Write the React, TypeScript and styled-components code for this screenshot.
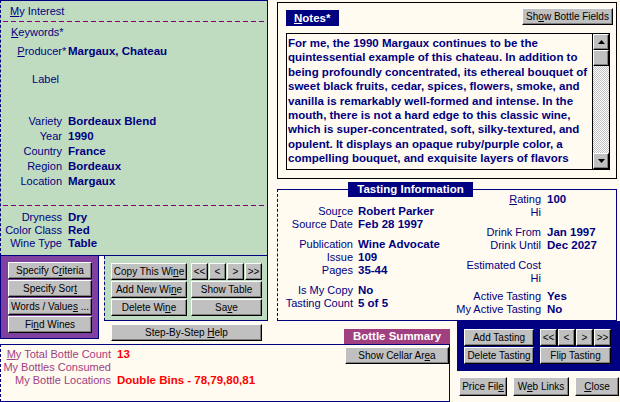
import styled, { createGlobalStyle } from 'styled-components';

const NAVY = '#000080';
const GREEN = '#c0dcc0';
const CREAM = '#fffbf0';
const PURPLE = '#8040a0';
const MAUVE = '#a04080';

const GlobalStyle = createGlobalStyle`
  body {
    margin: 0;
    background: ${CREAM};
    font-family: "Liberation Sans", Arial, sans-serif;
  }
`;

const notes = [
  'For me, the 1990 Margaux continues to be the',
  'quintessential example of this chateau. In addition to',
  'being profoundly concentrated, its ethereal bouquet of',
  'sweet black fruits, cedar, spices, flowers, smoke, and',
  'vanilla is remarkably well-formed and intense. In the',
  'mouth, there is not a hard edge to this classic wine,',
  'which is super-concentrated, soft, silky-textured, and',
  'opulent. It displays an opaque ruby/purple color, a',
  'compelling bouquet, and exquisite layers of flavors',
];

type FieldProps = {
  label: React.ReactNode;
  value?: React.ReactNode;
  w: number;
  gap: number;
  h?: number;
  mt?: number;
  inset?: number;
  color?: string;
  valueColor?: string;
};

const Field = ({ label, value, w, gap, h, mt, inset, color, valueColor }: FieldProps) => (
  <FieldRow $h={h} $mt={mt}>
    <FieldLabel $w={w} $gap={gap} $inset={inset} $color={color}>
      {label}
    </FieldLabel>
    {value && <FieldValue $color={valueColor}>{value}</FieldValue>}
  </FieldRow>
);

const App = () => {
  return (
    <>
      <GlobalStyle />
      <Page>
        <LeftCol>
          <InfoPanel>
            <PanelTitle $h={20} $pl={9}>
              <U>M</U>y Interest
            </PanelTitle>
            <Dashes />
            <PanelTitle $h={21} $pl={10}>
              <U>K</U>eywords*
            </PanelTitle>
            <Field
              h={15}
              w={61}
              gap={6}
              label={
                <>
                  <U>P</U>roducer<Star>*</Star>
                </>
              }
              value='Margaux, Chateau'
            />
            <Field h={15} mt={13} w={61} gap={6} inset={3} label='Label' />
            <Field h={15} mt={27} w={61} gap={6} label='Variety' value='Bordeaux Blend' />
            <Field h={15} w={61} gap={6} label='Year' value='1990' />
            <Field h={15} w={61} gap={6} label='Country' value='France' />
            <Field h={15} w={61} gap={6} label='Region' value='Bordeaux' />
            <Field h={15} w={61} gap={6} label='Location' value='Margaux' />
            <Dashes $mt={17} />
            <Field mt={4} w={61} gap={6} label='Dryness' value='Dry' />
            <Field w={61} gap={6} label='Color Class' value='Red' />
            <Field w={61} gap={6} label='Wine Type' value='Table' />
          </InfoPanel>
          <LowerRow>
            <SearchPanel>
              <Btn $w={84}>
                Specify C<U>r</U>iteria
              </Btn>
              <Btn $w={84}>
                Specify Sor<U>t</U>
              </Btn>
              <Btn $w={84}>
                Words / Value<U>s</U> ...
              </Btn>
              <Btn $w={84}>
                Fi<U>n</U>d Wines
              </Btn>
            </SearchPanel>
            <WineSide>
              <WinePanel>
                <Btn $w={76}>
                  Copy This Wi<U>n</U>e
                </Btn>
                <NavGroup>
                  <Btn $w={17}>&lt;&lt;</Btn>
                  <Btn $w={17}>&lt;</Btn>
                  <Btn $w={17}>&gt;</Btn>
                  <Btn $w={17}>&gt;&gt;</Btn>
                </NavGroup>
                <Btn $w={76}>
                  Add New Wi<U>n</U>e
                </Btn>
                <Btn $w={71}>Show Table</Btn>
                <Btn $w={76}>
                  Delete Wi<U>n</U>e
                </Btn>
                <Btn $w={71}>
                  Sa<U>v</U>e
                </Btn>
              </WinePanel>
              <HelpBtn $w={151} $h={17}>
                Step-By-Step <U>H</U>elp
              </HelpBtn>
            </WineSide>
          </LowerRow>
        </LeftCol>

        <RightTop>
          <NotesPanel>
            <NotesHeader>
              <Tab $bg={NAVY} $w={53} $align='left'>
                <U>N</U>otes*
              </Tab>
              <Btn $w={91}>
                Sh<U>o</U>w Bottle Fields
              </Btn>
            </NotesHeader>
            <TextBox>
              <NoteText>
                {notes.map((line) => (
                  <NoteLine key={line}>{line}</NoteLine>
                ))}
              </NoteText>
              <ScrollBar>
                <ScrollBtn>
                  <svg width='7' height='4' viewBox='0 0 7 4'>
                    <polygon points='3.5,0 7,4 0,4' fill='#000' />
                  </svg>
                </ScrollBtn>
                <ScrollBtn />
                <ScrollTrack />
                <ScrollBtn>
                  <svg width='7' height='4' viewBox='0 0 7 4'>
                    <polygon points='0,0 7,0 3.5,4' fill='#000' />
                  </svg>
                </ScrollBtn>
              </ScrollBar>
            </TextBox>
          </NotesPanel>

          <TastingPanel>
            <FloatingTab $bg={NAVY} $w={125} $align='center'>
              Tasting Information
            </FloatingTab>
            <TastingCol $w={178} $pt={14}>
              <Field
                w={75}
                gap={5}
                label={
                  <>
                    Sou<U>r</U>ce
                  </>
                }
                value='Robert Parker'
              />
              <Field w={75} gap={5} label='Source Date' value='Feb 28 1997' />
              <Field mt={7} w={75} gap={5} label='Publication' value='Wine Advocate' />
              <Field w={75} gap={5} label='Issue' value='109' />
              <Field w={75} gap={5} label='Pages' value='35-44' />
              <Field mt={7} w={75} gap={5} label='Is My Copy' value='No' />
              <Field w={75} gap={5} label='Tasting Count' value='5 of 5' />
            </TastingCol>
            <TastingCol $pt={2}>
              <Field
                w={85}
                gap={6}
                label={
                  <>
                    <U>R</U>ating
                  </>
                }
                value='100'
              />
              <Field w={85} gap={6} label='Hi' />
              <Field mt={7} w={85} gap={6} label='Drink From' value='Jan 1997' />
              <Field w={85} gap={6} label='Drink Until' value='Dec 2027' />
              <Field mt={7} w={85} gap={6} label='Estimated Cost' />
              <Field w={85} gap={6} label='Hi' />
              <Field mt={5} w={85} gap={6} label='Active Tasting' value='Yes' />
              <Field w={85} gap={6} label='My Active Tasting' value='No' />
            </TastingCol>
          </TastingPanel>
        </RightTop>

        <SummaryTab $bg={MAUVE} $w={106} $align='center'>
          Bottle Summary
        </SummaryTab>

        <Summary>
          <SummaryFields>
            <Field
              w={110}
              gap={6}
              color={MAUVE}
              valueColor='#ff0000'
              label={
                <>
                  <U>M</U>y Total Bottle Count
                </>
              }
              value='13'
            />
            <Field w={110} gap={6} color={MAUVE} label='My Bottles Consumed' />
            <Field
              w={110}
              gap={6}
              color={MAUVE}
              valueColor='#ff0000'
              label='My Bottle Locations'
              value='Double Bins - 78,79,80,81'
            />
          </SummaryFields>
          <CellarBtn $w={104}>
            Show Cellar Ar<U>e</U>a
          </CellarBtn>
        </Summary>

        <TastingControls>
          <TastingBar>
            <Btn $w={70}>Add Tasting</Btn>
            <NavGroup>
              <Btn $w={17}>&lt;&lt;</Btn>
              <Btn $w={17}>&lt;</Btn>
              <Btn $w={17}>&gt;</Btn>
              <Btn $w={17}>&gt;&gt;</Btn>
            </NavGroup>
            <Btn $w={70}>Delete Tasting</Btn>
            <Btn $w={71}>Flip Tasting</Btn>
          </TastingBar>
          <Footer>
            <Btn $w={48} $h={19}>
              Price Fil<U>e</U>
            </Btn>
            <Btn $w={56} $h={19}>
              W<U>e</U>b Links
            </Btn>
            <Btn $w={44} $h={19}>
              <U>C</U>lose
            </Btn>
          </Footer>
        </TastingControls>
      </Page>
    </>
  );
};

const Page = styled.div`
  width: 620px;
  height: 402px;
  overflow: hidden;
  display: grid;
  grid-template-columns: 268px 9px 67px 106px 7px 163px;
  grid-template-rows: 321px 23px 58px;
  color: ${NAVY};
`;

const U = styled.span`
  text-decoration: underline;
`;

const Star = styled.span`
  display: inline-block;
  width: 0;
  overflow: visible;
`;

const Btn = styled.button<{ $w: number; $h?: number }>`
  box-sizing: border-box;
  width: ${(p) => p.$w}px;
  height: ${(p) => p.$h ?? 17}px;
  padding: 0;
  background: #c0c0c0;
  border: 1px solid;
  border-color: #fff #000 #000 #fff;
  box-shadow: inset -1px -1px 0 #808080;
  font-family: 'Liberation Sans', Arial, sans-serif;
  font-size: 10px;
  line-height: 1;
  color: #000;
  white-space: nowrap;
  cursor: pointer;
`;

const HelpBtn = styled(Btn)`
  margin: 3px 0 0 7px;
`;

const CellarBtn = styled(Btn)`
  margin: 2px 0 0 0;
`;

const LeftCol = styled.div`
  grid-column: 1;
  grid-row: 1 / 3;
  display: flex;
  flex-direction: column;
`;

const InfoPanel = styled.div`
  box-sizing: border-box;
  height: 256px;
  background: ${GREEN};
  border: 1px solid ${NAVY};
  border-left: 1px dashed ${NAVY};
`;

const PanelTitle = styled.div<{ $h: number; $pl: number }>`
  height: ${(p) => p.$h}px;
  line-height: ${(p) => p.$h}px;
  padding-left: ${(p) => p.$pl}px;
  font-size: 11px;
`;

const Dashes = styled.div<{ $mt?: number }>`
  height: 1px;
  margin: ${(p) => p.$mt ?? 0}px 2px 0 2px;
  background: repeating-linear-gradient(to right, #800080 0 5px, transparent 5px 8px);
`;

const FieldRow = styled.div<{ $h?: number; $mt?: number }>`
  display: flex;
  align-items: center;
  height: ${(p) => p.$h ?? 13}px;
  margin-top: ${(p) => p.$mt ?? 0}px;
  white-space: nowrap;
`;

const FieldLabel = styled.span<{ $w: number; $gap: number; $inset?: number; $color?: string }>`
  box-sizing: border-box;
  flex-shrink: 0;
  width: ${(p) => p.$w + p.$gap}px;
  padding-right: ${(p) => p.$gap + (p.$inset ?? 0)}px;
  text-align: right;
  font-size: 11px;
  color: ${(p) => p.$color ?? NAVY};
`;

const FieldValue = styled.span<{ $color?: string }>`
  font-size: 11.5px;
  font-weight: bold;
  color: ${(p) => p.$color ?? NAVY};
`;

const LowerRow = styled.div`
  display: flex;
`;

const SearchPanel = styled.div`
  box-sizing: border-box;
  width: 99px;
  height: 83px;
  padding: 6px 0 0 7px;
  background: ${PURPLE};
  border: 1px solid ${NAVY};
  border-top: none;
  display: flex;
  flex-direction: column;
  gap: 1px;
`;

const WineSide = styled.div`
  display: flex;
  flex-direction: column;
  margin-left: 5px;
`;

const WinePanel = styled.div`
  box-sizing: border-box;
  width: 164px;
  height: 65px;
  padding: 7px 0 0 6px;
  background: ${GREEN};
  border: 1px solid ${NAVY};
  border-top: none;
  border-left: 1px dashed ${NAVY};
  display: grid;
  grid-template-columns: 76px 71px;
  grid-auto-rows: 17px;
  column-gap: 4px;
  row-gap: 1px;
`;

const NavGroup = styled.div`
  display: flex;
  gap: 1px;
`;

const RightTop = styled.div`
  grid-column: 3 / 7;
  grid-row: 1;
  display: flex;
  flex-direction: column;
  padding-right: 3px;
`;

const NotesPanel = styled.div`
  box-sizing: border-box;
  height: 177px;
  margin-top: 2px;
  border: 1px solid #000;
  padding: 0 3px 0 8px;
`;

const NotesHeader = styled.div`
  display: flex;
  justify-content: space-between;
  align-items: flex-start;
  height: 30px;
  padding-top: 5px;
  box-sizing: border-box;
`;

const Tab = styled.div<{ $bg: string; $w: number; $align: string }>`
  box-sizing: border-box;
  width: ${(p) => p.$w}px;
  height: 16px;
  line-height: 16px;
  padding: 0 8px;
  background: ${(p) => p.$bg};
  color: #fff;
  font-size: 11.5px;
  font-weight: bold;
  text-align: ${(p) => p.$align};
  white-space: nowrap;
  margin-top: 2px;
`;

const FloatingTab = styled(Tab)`
  position: absolute;
  top: -8px;
  left: 70px;
  height: 15px;
  line-height: 15px;
  margin: 0;
  padding: 0;
`;

const SummaryTab = styled(Tab)`
  grid-column: 4;
  grid-row: 2;
  align-self: end;
  height: 15px;
  line-height: 15px;
  margin: 0;
  padding: 0;
`;

const TextBox = styled.div`
  box-sizing: border-box;
  width: 324px;
  height: 137px;
  border: 1px solid #000;
  display: flex;
`;

const NoteText = styled.div`
  flex: 1;
  padding: 2px 0 0 1px;
  font-size: 11.5px;
  font-weight: bold;
  line-height: 14.4px;
  color: ${NAVY};
  overflow: hidden;
`;

const NoteLine = styled.div`
  white-space: nowrap;
`;

const ScrollBar = styled.div`
  width: 16px;
  border-left: 1px solid #000;
  display: flex;
  flex-direction: column;
`;

const ScrollBtn = styled.div`
  box-sizing: border-box;
  height: 16px;
  background: #c0c0c0;
  border: 1px solid;
  border-color: #fff #000 #000 #fff;
  box-shadow: inset -1px -1px 0 #808080;
  display: flex;
  align-items: center;
  justify-content: center;
`;

const ScrollTrack = styled.div`
  flex: 1;
  background: repeating-conic-gradient(#c0c0c0 0 25%, #fff 0 50%) 0 0 / 2px 2px;
`;

const TastingPanel = styled.div`
  position: relative;
  flex: 1;
  margin-top: 10px;
  display: flex;
  border: 1px solid ${NAVY};
  border-left: 1px dashed ${NAVY};
`;

const TastingCol = styled.div<{ $w?: number; $pt: number }>`
  width: ${(p) => (p.$w ? `${p.$w}px` : 'auto')};
  padding-top: ${(p) => p.$pt}px;
`;

const Summary = styled.div`
  grid-column: 1 / 5;
  grid-row: 3;
  box-sizing: border-box;
  display: flex;
  justify-content: space-between;
  align-items: flex-start;
  border: 1px solid ${NAVY};
  border-left: 1px dashed ${NAVY};
`;

const SummaryFields = styled.div`
  padding-top: 2px;
`;

const TastingControls = styled.div`
  grid-column: 6;
  grid-row: 2 / 4;
  display: flex;
  flex-direction: column;
`;

const TastingBar = styled.div`
  box-sizing: border-box;
  height: 50px;
  padding: 8px 0 0 7px;
  background: ${NAVY};
  display: grid;
  grid-template-columns: 70px 71px;
  grid-auto-rows: 17px;
  column-gap: 6px;
  row-gap: 1px;
`;

const Footer = styled.div`
  display: flex;
  gap: 6px;
  margin: 6px 0 0 2px;
`;

export default App;
